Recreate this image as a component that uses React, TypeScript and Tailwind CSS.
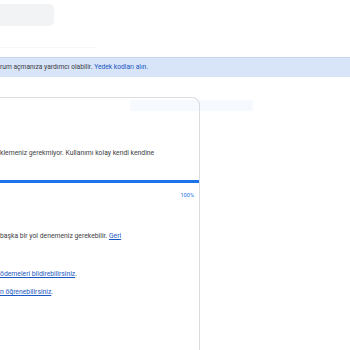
import React from "react";

export default function App() {
  return (
    <div
      className="w-[350px] h-[350px] overflow-hidden bg-white relative text-[#3c4043]"
      style={{ fontFamily: "Roboto, 'Liberation Sans', Arial, sans-serif" }}
    >
      <div className="pt-[4px]">
        <div className="w-[54px] h-[22px] rounded-r-[5px] bg-[#f1f3f4]" />
      </div>
      <div className="mt-[21px] w-[96px] h-px bg-[#f8f8f8]" />
      <div className="mt-[9px] h-[20px] border-t border-[#c9d5e8] bg-[#d8e4f8] flex items-center text-[6.7px] leading-none">
        <span className="text-[#3c4043]">rum açmanıza yardımcı olabilir.&nbsp;</span>
        <span className="text-[#1a57c2]">Yedek kodları alın.</span>
      </div>
      <div className="mt-[20px] relative">
        <div className="absolute left-[130px] top-[3px] w-[123px] h-[11px] bg-[#f6f9fd]" />
        <div className="relative w-[200px] h-[300px] border border-l-0 border-[#dadce0] rounded-tr-[8px] flex flex-col">
          <div className="mt-[51px] text-[6.8px] leading-[9px] text-[#3c4043] whitespace-nowrap">
            klemeniz gerekmiyor. Kullanımı kolay kendi kendine
          </div>
          <div className="mt-[22px] h-[3px] w-full bg-[#1a73e8]" />
          <div className="mt-[9px] pr-[5px] text-right text-[5.6px] leading-[6px] text-[#1a73e8]">100%</div>
          <div className="mt-[34px] text-[6.8px] leading-[9px] whitespace-nowrap">
            başka bir yol denemeniz gerekebilir.{" "}
            <span className="text-[#1a57c2] underline">Geri</span>
          </div>
          <div className="mt-[29px] text-[6.8px] leading-[9px] whitespace-nowrap">
            <span className="text-[#1a57c2] underline">ödemeleri bildirebilirsiniz</span>.
          </div>
          <div className="mt-[9px] text-[6.8px] leading-[9px] whitespace-nowrap">
            <span className="text-[#1a57c2] underline">n öğrenebilirsiniz</span>.
          </div>
        </div>
      </div>
    </div>
  );
}
